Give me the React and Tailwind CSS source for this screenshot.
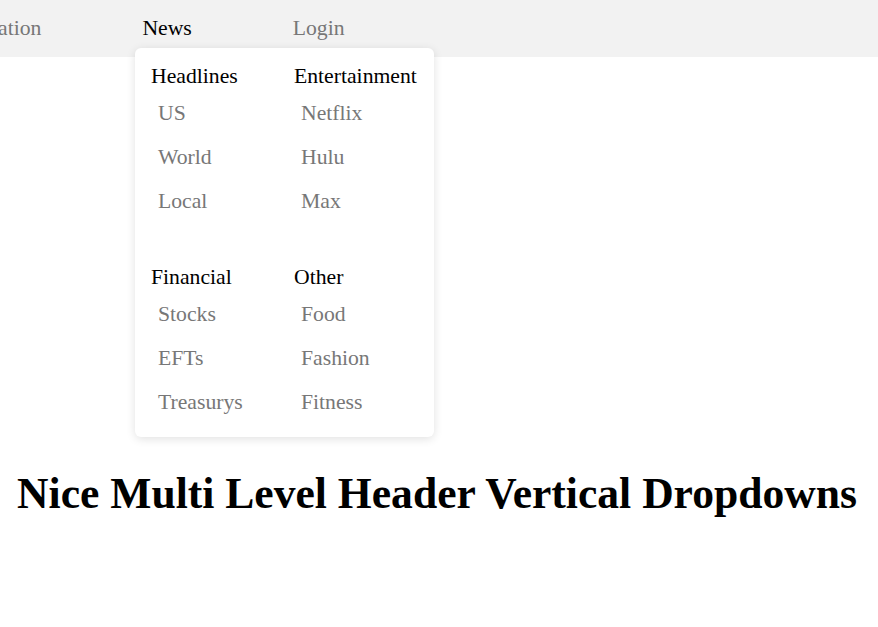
import React from "react";

const navItems = [
  { label: "Navigation", active: false },
  { label: "News", active: true },
  { label: "Login", active: false },
];

const groups = [
  { title: "Headlines", items: ["US", "World", "Local"] },
  { title: "Entertainment", items: ["Netflix", "Hulu", "Max"] },
  { title: "Financial", items: ["Stocks", "EFTs", "Treasurys"] },
  { title: "Other", items: ["Food", "Fashion", "Fitness"] },
];

const App = () => {
  return (
    <div
      className="relative min-h-[627px] bg-white text-black overflow-hidden"
      style={{ fontFamily: '"Liberation Serif", "Times New Roman", serif' }}
    >
      {/* Top bar */}
      <nav className="h-[57px] bg-[#f2f2f2] flex items-center">
        <ul className="flex items-center gap-[101px] ml-[-55px] text-[21.7px] leading-[25px] whitespace-nowrap">
          {navItems.map((item) => (
            <li
              key={item.label}
              className={item.active ? "text-black" : "text-[#777777]"}
            >
              {item.label}
            </li>
          ))}
        </ul>
      </nav>

      {/* News dropdown */}
      <div className="absolute left-[135px] top-[48px] w-[299px] bg-white rounded-md shadow-[0_2px_10px_rgba(0,0,0,0.12)] pt-4 pb-[15px] px-4">
        <div className="grid grid-cols-[143px_1fr] gap-y-[44px] text-[21.7px] leading-[25px]">
          {groups.map((group) => (
            <div key={group.title}>
              <div className="text-black whitespace-nowrap">{group.title}</div>
              <ul>
                {group.items.map((sub) => (
                  <li key={sub} className="pl-[7px] pt-3 pb-[7px] text-[#777777]">
                    {sub}
                  </li>
                ))}
              </ul>
            </div>
          ))}
        </div>
      </div>

      <h1 className="mt-[411px] pr-1 text-center font-bold text-[43.6px] leading-[50px] whitespace-nowrap">
        Nice Multi Level Header Vertical Dropdowns
      </h1>
    </div>
  );
};

export default App;
